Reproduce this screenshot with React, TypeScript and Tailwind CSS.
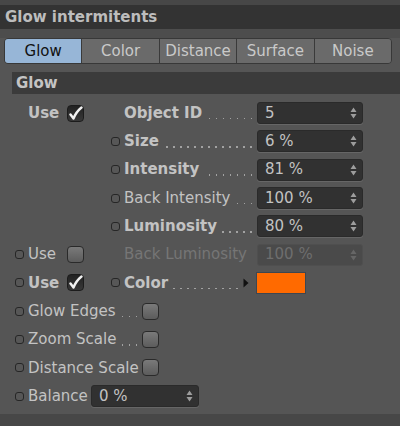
import React from "react";

const tabs = ["Glow", "Color", "Distance", "Surface", "Noise"];

function Dot() {
  return <span className="w-[9px] h-[9px] shrink-0 rounded-[3px] border-[1.5px] border-[#262626] bg-[#575757]" />;
}

// dotted leader, aligned to the right edge like the original
function Leader() {
  return (
    <span className="flex-1 min-w-0 self-end mb-[5px] mr-[5px] ml-[4px] h-[1.5px] bg-[repeating-linear-gradient(to_left,#a2a2a2_0_1.5px,transparent_1.5px_7px)]" />
  );
}

function Check({ on }: { on?: boolean }) {
  if (on) {
    return (
      <span className="w-[17px] h-[17px] shrink-0 rounded-[4px] border border-[#1c1c1c] bg-gradient-to-b from-[#222] to-[#383838] flex items-center justify-center">
        <svg width="15" height="15" viewBox="0 0 15 15">
          <path d="M2.5 8.5 L5.5 12.5 Q8 6 13.5 1.5" fill="none" stroke="#f2f2f2" strokeWidth="2.4" strokeLinecap="round" strokeLinejoin="round" />
        </svg>
      </span>
    );
  }
  return <span className="w-[17px] h-[17px] shrink-0 rounded-[4px] border border-[#2a2a2a] bg-gradient-to-b from-[#7a7a7a] to-[#5c5c5c]" />;
}

function Field({ value, dim, w = "w-[106px]" }: { value: string; dim?: boolean; w?: string }) {
  return (
    <div
      className={`${w} h-[22px] rounded-[3px] flex items-center pl-[7px] pr-[5px] border ${
        dim ? "bg-[#4a4a4a] border-[#4f4f4f] text-[#6e6e6e]" : "bg-[#313131] border-[#2a2a2a] text-[#c2c2c2] shadow-[0_1px_0_#666]"
      }`}
    >
      <span className="flex-1 text-[15px] leading-none">{value}</span>
      <svg width="7" height="12" viewBox="0 0 7 12">
        <path d="M3.5 0.5 L6.5 5 L0.5 5 Z M3.5 11.5 L6.5 7 L0.5 7 Z" fill={dim ? "#666" : "#9d9d9d"} />
      </svg>
    </div>
  );
}

function Row({ children }: { children: React.ReactNode }) {
  return <div className="h-[28.3px] flex items-center">{children}</div>;
}

function Left({ dot, bold, check, use = true }: { dot?: boolean; bold?: boolean; check?: boolean; use?: boolean }) {
  return (
    <div className="w-[111px] shrink-0 flex items-center pl-[15px]">
      {dot ? <Dot /> : <span className="w-[9px] shrink-0" />}
      {use && (
        <>
          <span className={`ml-[4px] w-[39px] ${bold ? "font-bold" : ""}`}>Use</span>
          <Check on={check} />
        </>
      )}
    </div>
  );
}

function Param({ label, bold, dot = true, value, dim, leader = true }: { label: string; bold?: boolean; dot?: boolean; value: string; dim?: boolean; leader?: boolean }) {
  return (
    <div className="flex items-center">
      {dot ? <Dot /> : <span className="w-[9px] shrink-0" />}
      <div className="w-[133px] ml-[4px] flex items-center">
        <span className={`whitespace-nowrap ${bold ? "font-bold" : ""} ${dim ? "text-[#767676]" : ""}`}>{label}</span>
        {leader ? <Leader /> : <span className="flex-1" />}
      </div>
      <Field value={value} dim={dim} />
    </div>
  );
}

function Toggle({ label, leader }: { label: string; leader?: boolean }) {
  return (
    <div className="flex items-center pl-[15px]">
      <Dot />
      <div className="w-[114px] ml-[4px] flex items-center">
        <span className="whitespace-nowrap">{label}</span>
        {leader ? <Leader /> : <span className="flex-1" />}
      </div>
      <Check />
    </div>
  );
}

export default function App() {
  return (
    <div className="w-[400px] h-[426px] bg-[#555555] overflow-hidden flex flex-col font-['DejaVu_Sans',sans-serif] text-[15px] text-[#c3c3c3]">
      <div className="h-[5px] bg-[#474747]" />
      <div className="h-[24px] bg-[#333333] pl-[5px] flex items-center font-bold text-[#bdbdbd]">Glow intermitents</div>
      <div className="h-[9px] bg-[#4d4d4d]" />

      {/* tabs */}
      <div className="ml-[4px] w-[388px] h-[26px] flex rounded-[4px] border border-[#383838] overflow-hidden">
        {tabs.map((t, i) => (
          <div
            key={t}
            className={`flex-1 flex items-center justify-center ${i < tabs.length - 1 ? "border-r border-[#3a3a3a]" : ""} ${
              i === 0 ? "bg-[#97b6d7] text-[#111]" : "bg-[#6a6a6a] text-[#c9c9c9]"
            }`}
          >
            {t}
          </div>
        ))}
      </div>

      <div className="h-[8px]" />
      <div className="ml-[12px] h-[22px] bg-[#3b3b3b] pl-[4px] flex items-center font-bold text-[#c4c4c4]">Glow</div>

      <div className="mt-[5px] flex flex-col">
        <Row>
          <Left bold check />
          <Param label="Object ID" bold dot={false} value="5" />
        </Row>
        <Row>
          <Left use={false} />
          <Param label="Size" bold value="6 %" />
        </Row>
        <Row>
          <Left use={false} />
          <Param label="Intensity" bold value="81 %" />
        </Row>
        <Row>
          <Left use={false} />
          <Param label="Back Intensity" value="100 %" />
        </Row>
        <Row>
          <Left use={false} />
          <Param label="Luminosity" bold value="80 %" />
        </Row>
        <Row>
          <Left dot />
          <Param label="Back Luminosity" dot={false} dim leader={false} value="100 %" />
        </Row>
        <Row>
          <Left dot bold check />
          <div className="flex items-center">
            <Dot />
            <div className="w-[132px] ml-[4px] flex items-center">
              <span className="font-bold">Color</span>
              <Leader />
              <svg width="6" height="10" viewBox="0 0 6 10" className="mr-[7px]">
                <path d="M0.5 0.5 L5.5 5 L0.5 9.5 Z" fill="#111" />
              </svg>
            </div>
            <div className="w-[50px] h-[22px] bg-[#ff6a00] border border-[#3d4650]" />
          </div>
        </Row>
        <Row>
          <Toggle label="Glow Edges" leader />
        </Row>
        <Row>
          <Toggle label="Zoom Scale" leader />
        </Row>
        <Row>
          <Toggle label="Distance Scale" />
        </Row>
        <Row>
          <div className="flex items-center pl-[15px]">
            <Dot />
            <span className="ml-[4px] w-[63px]">Balance</span>
            <Field value="0 %" w="w-[108px]" />
          </div>
        </Row>
      </div>

      <div className="mt-auto h-[12px] bg-[#474747]" />
    </div>
  );
}
